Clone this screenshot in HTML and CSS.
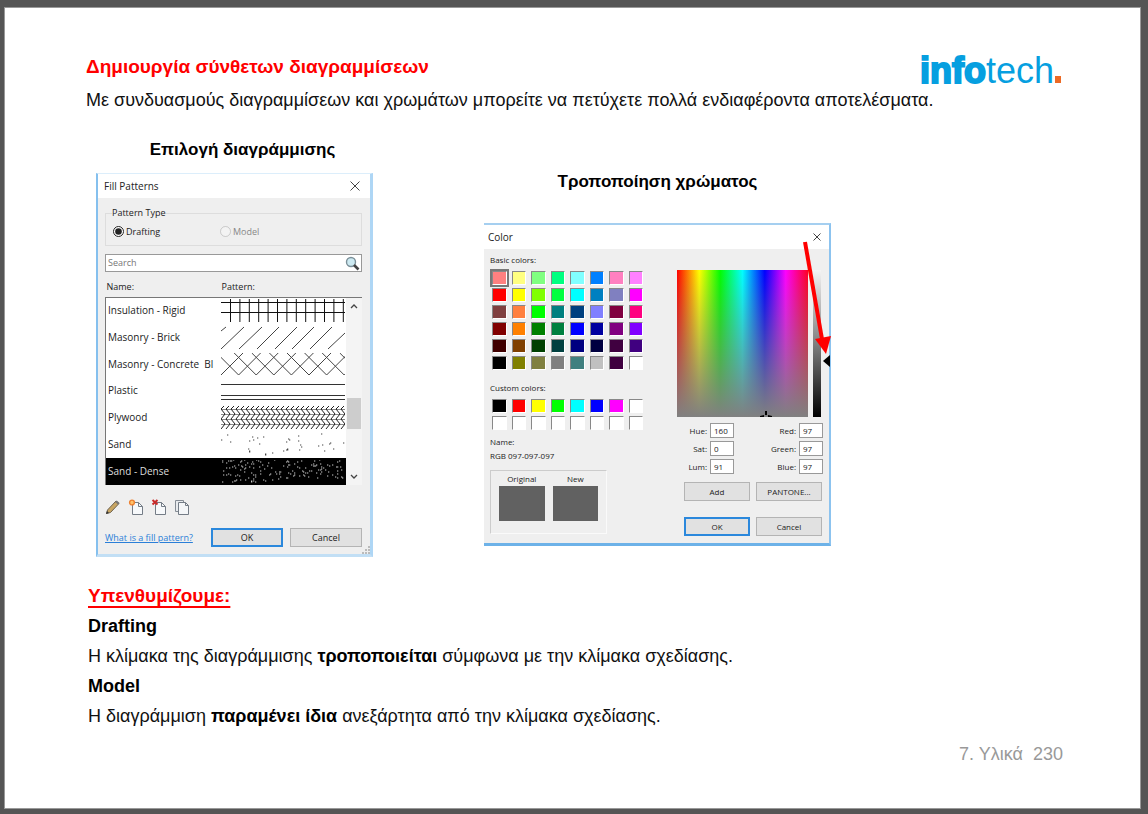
FILE: index.html
```
<!DOCTYPE html>
<html lang="el">
<head>
<meta charset="utf-8">
<title>Υλικά</title>
<link rel="stylesheet" href="styles.css">
</head>
<body>
<main class="sheet">
  <header class="top">
    <h1 class="title">Δημιουργία σύνθετων διαγραμμίσεων</h1>
    <div class="logo"><b>info</b><span>tech</span><i class="logo-dot"></i></div>
  </header>
  <p class="text">Με συνδυασμούς διαγραμμίσεων και χρωμάτων μπορείτε να πετύχετε πολλά ενδιαφέροντα αποτελέσματα.</p>

  <div class="figures">
    <section class="figure">
      <h2 class="caption caption-fill">Επιλογή διαγράμμισης</h2>
      <div class="dialog fill">
        <div class="bar"><span>Fill Patterns</span>
          <button class="close" aria-label="Close"><svg width="10" height="10" viewBox="0 0 10 10"><path d="M.5.5l9 9M9.500.5l-9 9" stroke="#444" fill="none"/></svg></button></div>
        <div class="fill-body">
          <fieldset class="types">
            <legend>Pattern Type</legend>
            <label class="type"><input type="radio" name="type" checked>Drafting</label>
            <label class="type off"><input type="radio" name="type" disabled>Model</label>
          </fieldset>
          <div class="search">
            <input type="text" placeholder="Search" aria-label="Search">
            <svg width="15" height="15" viewBox="0 0 15 15"><circle cx="6" cy="6" r="4.500" fill="#cdeaf2" stroke="#7b8f98" stroke-width="1.400"/><path d="M9 9l4.500 4.500" stroke="#444" stroke-width="2.600"/></svg>
          </div>
          <div class="list">
            <table class="patterns">
              <thead><tr><th class="col-name">Name:</th><th>Pattern:</th></tr></thead>
              <tbody>
                <tr><td>Insulation - Rigid</td><td><svg viewBox="0 0 124 23"><path d="M0 3.500H124M0 13.500H124" stroke="#111"/><path id="rigid" d="" stroke="#111"/></svg></td></tr>
                <tr><td>Masonry - Brick</td><td><svg viewBox="0 0 124 23"><path d="M0 5l5-4M0 23L23 1M18 23L41 1M36 23L58 1M54 23L76 1M71 23L93 1M89 23L111 1M107 23l17-16" stroke="#444" fill="none"/></svg></td></tr>
                <tr><td>Masonry - Concrete&nbsp; Bl</td><td><svg viewBox="0 0 124 23"><path id="concrete" d="" stroke="#444" fill="none"/></svg></td></tr>
                <tr><td>Plastic</td><td><svg viewBox="0 0 124 23"><path d="M0 5.500H124M0 16.500H124M0 20.500H124" stroke="#333"/></svg></td></tr>
                <tr><td>Plywood</td><td><svg viewBox="0 0 124 23"><path d="M0 3.500H124M0 8.500H124M0 13.500H124M0 18.500H124" stroke="#888"/><path id="ply" d="" stroke="#222" fill="none"/></svg></td></tr>
                <tr><td>Sand</td><td><svg viewBox="0 0 124 23"><path id="sand" d="" stroke="#444" stroke-width="1.200"/></svg></td></tr>
                <tr class="picked"><td>Sand - Dense</td><td><svg viewBox="0 0 124 23"><path id="dense" d="" stroke="#ccc" stroke-width="1.200"/></svg></td></tr>
              </tbody>
            </table>
            <div class="scroll">
              <svg width="8" height="6" viewBox="0 0 8 6"><path d="M1 5l3-3 3 3" fill="none" stroke="#444" stroke-width="1.300"/></svg>
              <span class="thumb"></span>
              <svg width="8" height="6" viewBox="0 0 8 6"><path d="M1 1l3 3 3-3" fill="none" stroke="#444" stroke-width="1.300"/></svg>
            </div>
          </div>
          <div class="tools">
            <button aria-label="Edit"><svg width="16" height="16" viewBox="0 0 16 16"><path d="M1.500 14.500l1-3.500L11 2l3 2.500-8.500 9z" fill="#c8a562" stroke="#6d6250"/><path d="M10 3l1.800-1.500L14.500 4 13 5.500z" fill="#777"/><path d="M1 15l1-3 2 2z" fill="#333"/></svg></button>
            <button aria-label="New"><svg width="16" height="16" viewBox="0 0 16 16"><path d="M4.500 3.500h6l4 4v8h-10z" fill="#f7f9fb" stroke="#747c86"/><path d="M10.500 3.500v4h4" fill="none" stroke="#747c86"/><circle cx="4" cy="3.500" r="2.400" fill="#ffc36b" stroke="#ee8030" stroke-width="1.400"/></svg></button>
            <button aria-label="Delete"><svg width="16" height="16" viewBox="0 0 16 16"><path d="M4.500 3.500h6l4 4v8h-10z" fill="#f7f9fb" stroke="#747c86"/><path d="M10.500 3.500v4h4" fill="none" stroke="#747c86"/><path d="M1.500 1l5 4.500M6.500 1l-5 4.500" stroke="#c92a2a" stroke-width="2"/></svg></button>
            <button aria-label="Duplicate"><svg width="16" height="16" viewBox="0 0 16 16"><path d="M1.500 1.500h8v11h-8z" fill="#e8ebee" stroke="#858c95"/><path d="M4.500 3.500h7l3 3v9h-10z" fill="#f4f6f8" stroke="#747c86"/><path d="M11.500 3.500v3h3" fill="none" stroke="#747c86"/></svg></button>
          </div>
          <div class="actions">
            <a href="#help">What is a fill pattern?</a>
            <button class="btn main">OK</button>
            <button class="btn">Cancel</button>
          </div>
        </div>
        <svg class="grip" width="8" height="8" viewBox="0 0 8 8"><path d="M6 0h2v2H6zM3 3h2v2H3zM6 3h2v2H6zM0 6h2v2H0zM3 6h2v2H3zM6 6h2v2H6z" fill="#bbb"/></svg>
      </div>
    </section>

    <section class="figure second">
      <h2 class="caption">Τροποποίηση χρώματος</h2>
      <div class="dialog color">
        <div class="bar"><span>Color</span>
          <button class="close" aria-label="Close"><svg width="8" height="8" viewBox="0 0 8 8"><path d="M.5.5l7 7M7.500.5l-7 7" stroke="#444" fill="none"/></svg></button></div>
        <div class="color-body">
          <div class="left">
            <div class="label">Basic colors:</div>
            <div class="swatches" id="basic"></div>
            <div class="label custom-label">Custom colors:</div>
            <div class="swatches" id="custom"></div>
            <div class="label name-label">Name:</div>
            <div class="label">RGB 097-097-097</div>
            <div class="compare">
              <div><span>Original</span><i></i></div>
              <div><span>New</span><i></i></div>
            </div>
          </div>
          <div class="right">
            <div class="pick">
              <div class="spectrum"><svg width="12" height="6" viewBox="0 0 12 6"><path d="M5 0h2v4H5zM0 5l4-1v2H0zM12 5L8 4v2h4z"/></svg></div>
              <div class="lum"></div>
              <svg class="marker" width="7" height="12" viewBox="0 0 7 12"><path d="M0 6l7-6v12z"/></svg>
            </div>
            <div class="values">
              <label for="hue">Hue:</label><input id="hue" value="160"><label for="red">Red:</label><input id="red" value="97">
              <label for="sat">Sat:</label><input id="sat" value="0"><label for="green">Green:</label><input id="green" value="97">
              <label for="lumi">Lum:</label><input id="lumi" value="91"><label for="blue">Blue:</label><input id="blue" value="97">
            </div>
            <div class="pair">
              <button class="btn">Add</button><button class="btn">PANTONE...</button>
              <button class="btn main">OK</button><button class="btn">Cancel</button>
            </div>
          </div>
        </div>
        <svg class="arrow" width="30" height="114" viewBox="0 0 30 114"><path d="M3 1L20 98" stroke="#f00" stroke-width="4"/><path d="M13 98l16-3-5 18z" fill="#f00"/></svg>
      </div>
    </section>
  </div>

  <section class="notes">
    <h2 class="remind">Υπενθυμίζουμε:</h2>
    <h3 class="term">Drafting</h3>
    <p class="text">Η κλίμακα της διαγράμμισης <b>τροποποιείται</b> σύμφωνα με την κλίμακα σχεδίασης.</p>
    <h3 class="term">Model</h3>
    <p class="text">Η διαγράμμιση <b>παραμένει ίδια</b> ανεξάρτητα από την κλίμακα σχεδίασης.</p>
  </section>
  <footer class="foot">7. Υλικά&nbsp; 230</footer>
</main>
<script src="script.js"></script>
</body>
</html>
```
FILE: styles.css
```
* { box-sizing: border-box; }
body { margin: 0; background: #555; font-family: "Liberation Sans", Arial, sans-serif; color: #111; }
h1, h2, h3, p { margin: 0; }
button, input { font: inherit; color: inherit; }
button { cursor: pointer; }
svg { display: block; }

.sheet { margin: 7px 7px 5px 4px; min-height: calc(100vh - 12px); background: #fff; border: 1px solid #999; padding: 44px 77px 36px 81px; }
.top { display: flex; justify-content: space-between; height: 33px; }
.title { font-size: 19px; line-height: 30px; color: #f00; }
.text { font-size: 18px; line-height: 30px; }
.logo { display: flex; align-items: baseline; font-size: 36px; line-height: 38px; color: #069fe0; }
.logo b { -webkit-text-stroke: 2px #069fe0; }
.logo-dot { width: 6px; height: 7px; margin: 0 2px 0 1px; background: #ec6a25; }

.figures { display: flex; align-items: flex-start; gap: 111px; margin: 20px 0 24px 10px; }
.second { padding-top: 32px; }
.caption { font-size: 17px; line-height: 30px; text-align: center; color: #000; }
.caption-fill { padding-left: 16px; }
.dialog { position: relative; background: #efefef; font-family: "Open Sans", "Noto Sans", sans-serif; font-size: 9px; line-height: 12px; color: #222; }
.fill { width: 277px; margin-top: 8px; border: solid; border-width: 1px 3px 3px 2px; border-color: #dceefb #aed6f5 #c2dff5 #85c0ee; }
.color { width: 347px; margin-top: 26px; border: solid; border-width: 2px 2px 3px 0; border-color: #a5cff0 #8cc3ef #6db2e8; }
.bar { display: flex; align-items: center; justify-content: space-between; height: 24px; padding: 0 10px 0 6px; background: #fff; font-size: 10px; }
.color .bar { padding: 0 8px 0 4px; }
.close { padding: 0; border: 0; background: none; }

.fill-body { padding: 9px 8px 7px 7px; }
.types { display: flex; height: 39px; margin: 0; padding: 5px 7px 0; border: 1px solid #ddd; }
.types legend { padding: 0; margin-left: -1px; }
.type { display: flex; align-items: center; gap: 2px; width: 107px; height: 15px; }
.type input { width: 11px; height: 11px; margin: 0; accent-color: #222; }
.off { color: #888; }
.search { display: flex; align-items: center; height: 18px; margin-top: 8px; padding: 0 1px; border: 1px solid #999; background: #fff; }
.search input { flex: 1; min-width: 0; padding: 0 1px; border: 0; outline: 0; background: none; }
.search input::placeholder { color: #777; opacity: 1; }
.list { display: flex; height: 207px; margin-top: 6px; }
.patterns { width: 100%; height: 207px; border-collapse: collapse; table-layout: fixed; }
.patterns th { height: 19px; padding: 0 0 0 1px; text-align: left; font-weight: normal; }
.patterns .col-name { width: 115px; }
.patterns td { height: 26px; padding: 0; background: #fff; font-size: 10px; line-height: 15px; white-space: nowrap; }
.patterns td:first-child { padding-left: 2px; border-left: 1px solid #777; }
.patterns tbody tr:first-child td { border-top: 1px solid #777; }
.patterns td svg { width: 124px; height: 23px; }
.patterns .picked td { background: #000; color: #ddd; }
.scroll { display: flex; flex: none; flex-direction: column; align-items: center; justify-content: space-between; width: 16px; margin-top: 19px; padding: 5px 0; border-top: 1px solid #777; background: #f4f4f4; }
.thumb { width: 14px; height: 31px; margin-top: 43px; background: #cdcdcd; }
.tools { display: flex; gap: 7px; margin-top: 14px; }
.tools button { padding: 0; border: 0; background: none; }
.actions { display: grid; grid-template-columns: 1fr 72px 72px; gap: 7px; align-items: center; margin-top: 13px; }
.actions a { color: #2a7fd8; }
.btn { height: 19px; padding: 0; border: 1px solid #b4b4b4; background: #e1e1e1; }
.main { border: 2px solid #2b88dc; }
.grip { position: absolute; right: 0; bottom: 0; }

.color-body { display: flex; justify-content: space-between; padding: 4px 6px 7px; font-size: 8px; }
.left { width: 154px; }
.label { line-height: 14px; }
.swatches { display: grid; grid-template-columns: repeat(8, 1fr); gap: 3px 5px; padding: 4px 1px 0 2px; }
.swatch { height: 14px; padding: 0; border: 1px solid; border-color: #888 #fff #fff #888; }
.chosen { outline: 2px solid #777; }
.custom-label { margin-top: 11px; }
.name-label { margin-top: 5px; }
.compare { display: flex; gap: 8px; width: 117px; height: 64px; margin-top: 7px; padding: 2px 8px; border: 1px solid; border-color: #ccc #fafafa #fafafa #ccc; text-align: center; }
.compare div { flex: 1; }
.compare span { display: block; }
.compare i { display: block; height: 35px; margin-top: 1px; background: #616161; }
.right { width: 148px; padding-top: 17px; }
.pick { display: flex; gap: 5px; height: 147px; padding-left: 2px; }
.spectrum { display: flex; flex: 1; align-items: flex-end; justify-content: flex-end; padding-right: 36px; background: linear-gradient(rgba(128,128,128,0), #808080), linear-gradient(90deg, #f00, #ff0 17%, #0f0 33%, #0ff 50%, #00f 67%, #f0f 83%, #f02); }
.lum { width: 8px; background: linear-gradient(#f4f4f4, #808080 50%, #000); }
.marker { align-self: flex-end; margin: 0 -7px 50px -3px; }
.values { display: grid; grid-template-columns: 32px 24px 1fr 24px; gap: 3px; margin: 6px 0 0; text-align: right; line-height: 15px; }
.values input { width: 100%; height: 15px; padding: 0 3px; border: 1px solid #999; background: #fff; }
.pair { display: grid; grid-template-columns: 1fr 1fr; gap: 16px 6px; margin: 8px 1px 0 9px; }
.arrow { position: absolute; right: -3px; top: 16px; }

.notes { padding-left: 2px; }
.notes > * { line-height: 30px; }
.remind { font-size: 19px; color: #f00; text-decoration: underline; text-decoration-thickness: 2px; text-underline-offset: 4px; }
.term { font-size: 18px; color: #000; }
.notes b { color: #000; }
.foot { margin-top: 8px; text-align: right; font-size: 18px; line-height: 30px; color: #999; }
```
FILE: script.js
```
const basic = `ff8080 ffff80 80ff80 00ff80 80ffff 0080ff ff80c0 ff80ff
ff0000 ffff00 80ff00 00ff40 00ffff 0080c0 8080c0 ff00ff
804040 ff8040 00ff00 008080 004080 8080ff 800040 ff0080
800000 ff8000 008000 008040 0000ff 0000a0 800080 8000ff
400000 804000 004000 004040 000080 000040 400040 400080
000000 808000 808040 808080 408080 c0c0c0 400040 ffffff`.split(/\s+/);
const custom = "000000 ff0000 ffff00 00ff00 00ffff 0000ff ff00ff".split(" ").concat(Array(9).fill("ffffff"));

function fill(id, colors) {
  const box = document.getElementById(id);
  colors.forEach(c => {
    const b = document.createElement("button");
    b.className = "swatch";
    b.style.backgroundColor = "#" + c;
    b.setAttribute("aria-label", "#" + c);
    box.append(b);
  });
}
fill("basic", basic);
fill("custom", custom);
document.querySelector("#basic .swatch").classList.add("chosen");

const draw = (id, d) => document.getElementById(id).setAttribute("d", d);
let d = "";
for (let x = 9.5; x < 125; x += 9.4) d += `M${x} 0V23`;
draw("rigid", d);

d = "";
for (let x = 0; x < 150; x += 17.6) d += `M${x - 22} 0l22 22 22-22`;
draw("concrete", d);

d = "";
for (let x = 0; x < 124; x += 5) {
  d += `M${x} 3l3-3M${x} 3l4 5M${x} 13l4-5M${x} 13l4 5M${x} 23l4-5`;
}
draw("ply", d);

function dots(n, seed) {
  let s = seed, out = "";
  const next = () => (s = (s * 16807) % 2147483647) / 2147483647;
  for (let i = 0; i < n; i++) out += `M${Math.round(next() * 122)} ${Math.round(next() * 22)}h1.3`;
  return out;
}
draw("sand", dots(36, 71));
draw("dense", dots(150, 913));
```
